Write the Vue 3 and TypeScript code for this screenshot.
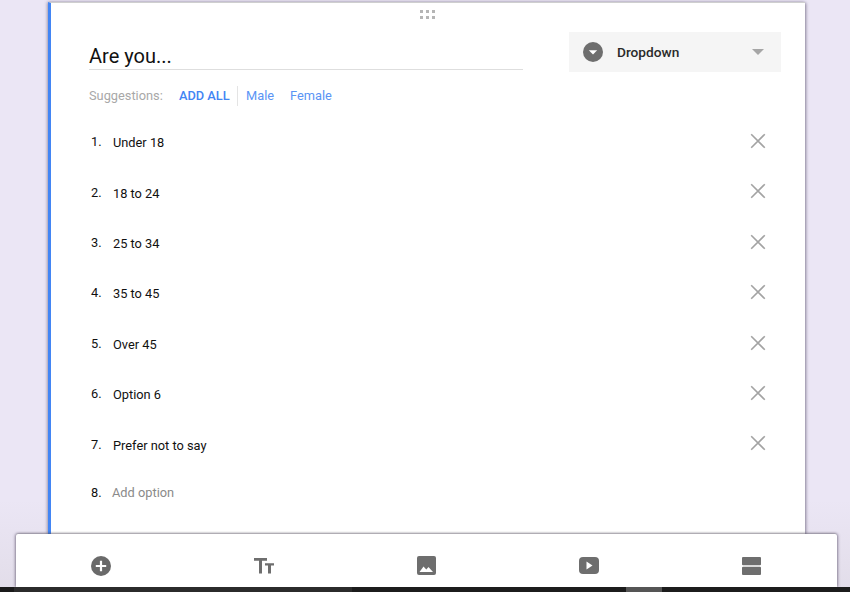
<script setup lang="ts">
const options: string[] = ['Under 18', '18 to 24', '25 to 34', '35 to 45', 'Over 45', 'Option 6', 'Prefer not to say']
</script>

<template>
  <div class="page">
    <main class="card">
      <div class="handle">
        <i v-for="n in 6" :key="n"></i>
      </div>
      <header class="head">
        <h1 class="title">Are you...</h1>
        <div class="type">
          <svg class="type-icon" width="20" height="20" viewBox="0 0 20 20">
            <circle cx="10" cy="10" r="10" fill="#6e6e6e" />
            <path d="M5.8 8.2h8.4L10 12.4z" fill="#fff" />
          </svg>
          <span class="type-label">Dropdown</span>
          <svg class="type-arrow" width="12" height="6" viewBox="0 0 12 6">
            <path d="M0 0h12L6 6z" fill="#a6a6a6" />
          </svg>
        </div>
      </header>
      <div class="suggest">
        <span class="suggest-label">Suggestions:</span>
        <span class="add-all">ADD ALL</span>
        <span class="sep"></span>
        <span class="link male">Male</span>
        <span class="link">Female</span>
      </div>
      <ol class="options">
        <li v-for="(o, i) in options" :key="o" class="option">
          <span class="num">{{ i + 1 }}.</span>
          <span class="text">{{ o }}</span>
          <svg class="close" width="16" height="16" viewBox="0 0 16 16">
            <path d="M1.2 1.2l13.6 13.6M14.8 1.2L1.2 14.8" stroke="#a3a3a3" stroke-width="1.6" fill="none" />
          </svg>
        </li>
        <li class="option add">
          <span class="num">8.</span>
          <span class="text muted">Add option</span>
        </li>
      </ol>
    </main>
    <nav class="toolbar">
      <svg width="20" height="20" viewBox="0 0 20 20">
        <circle cx="10" cy="10" r="10" fill="#6a6a6a" />
        <path d="M10 4.8v10.4M4.8 10h10.4" stroke="#fff" stroke-width="2.2" />
      </svg>
      <svg width="20" height="16" viewBox="0 0 20 16">
        <path d="M0 0h13v2.8H8v12.7H5V2.8H0z" fill="#6e6e6e" />
        <path d="M11 5.2h9v2.4h-3v7.9h-3V7.6h-3z" fill="#6e6e6e" />
      </svg>
      <svg width="19" height="19" viewBox="0 0 19 19">
        <rect width="19" height="19" rx="2" fill="#6e6e6e" />
        <path d="M2.5 16l4-5.5 2.8 3 2.2-2.6 4.5 5.1z" fill="#fff" />
      </svg>
      <svg width="20" height="17" viewBox="0 0 20 17">
        <rect width="20" height="17" rx="4" fill="#6e6e6e" />
        <path d="M7.5 4.5v8l6-4z" fill="#fff" />
      </svg>
      <svg width="19" height="18" viewBox="0 0 19 18">
        <rect width="19" height="8.2" rx="1" fill="#6e6e6e" />
        <rect y="9.8" width="19" height="8.2" rx="1" fill="#6e6e6e" />
      </svg>
    </nav>
    <footer class="taskbar">
      <span class="tab"></span>
    </footer>
  </div>
</template>

<style>
html,
body {
  margin: 0;
  background: #ebe6f5;
}
</style>

<style scoped>
.page {
  height: 592px;
  width: 850px;
  display: flex;
  flex-direction: column;
  overflow: hidden;
  font-family: Roboto, "Liberation Sans", sans-serif;
  background: linear-gradient(#ebe6f5 0 500px, #e2dde9 592px);
}
.card {
  flex: 1;
  min-height: 0;
  margin: 2px 0 0 48px;
  width: 757px;
  box-sizing: border-box;
  background: #fff;
  border-top: 1.5px solid #cfcfcf;
  border-left: 3px solid #4285f4;
  box-shadow: 1px 1px 3px rgba(70, 60, 90, 0.55), -1px 0 3px rgba(70, 60, 90, 0.35);
  padding: 0 24px 0 38px;
}
.handle {
  width: 15px;
  margin: 7px 0 0 331px;
  display: grid;
  grid-template-columns: repeat(3, 3px);
  gap: 3px;
  justify-content: space-between;
}
.handle i {
  width: 3px;
  height: 3px;
  background: #b5b5b5;
  display: block;
}
.head {
  display: flex;
  justify-content: space-between;
  margin-top: 13px;
  align-items: flex-start;
}
.title {
  width: 434px;
  height: 38px;
  box-sizing: border-box;
  margin: 0;
  padding-top: 12px;
  font-size: 20px;
  line-height: 24px;
  font-weight: 400;
  color: #111;
  border-bottom: 1px solid #dedede;
}
.type {
  width: 212px;
  height: 40px;
  box-sizing: border-box;
  background: #f5f5f5;
  display: flex;
  align-items: center;
  padding: 0 17px 0 14px;
}
.type-label {
  margin-left: 14px;
  font-size: 13.7px;
  font-weight: 500;
  color: #2a2a2a;
  flex: 1;
}
.suggest {
  display: flex;
  align-items: center;
  height: 20px;
  margin-top: 13.5px;
  font-size: 12.8px;
}
.suggest-label {
  color: #a8a8a8;
  width: 90px;
}
.add-all {
  color: #4285f4;
  font-weight: 500;
  width: 58px;
}
.sep {
  width: 1px;
  height: 20px;
  background: #e4e4e4;
}
.link {
  color: #5a94f5;
  margin-left: 16px;
}
.link.male {
  margin-left: 8px;
}
.options {
  list-style: none;
  margin: 12px 0 0;
  padding: 0;
}
.option {
  height: 50.4px;
  display: flex;
  align-items: center;
  font-size: 12.8px;
  color: #111;
}
.num {
  width: 24px;
  padding-left: 2px;
  box-sizing: border-box;
  margin-top: -2px;
}
.text {
  flex: 1;
}
.muted {
  color: #8a8a8a;
  margin-top: -2px;
  margin-left: -1px;
}
.add {
  margin-top: -1.5px;
}
.close {
  margin-right: 15.5px;
  margin-top: -3.5px;
}
.toolbar {
  height: 53px;
  margin: 0 13px 0 16px;
  background: #fff;
  flex: none;
  border-radius: 2px 2px 0 0;
  box-shadow: 0 -1px 2px rgba(90, 90, 90, 0.3), 1px 0 3px rgba(70, 60, 90, 0.45), -1px 0 3px rgba(70, 60, 90, 0.45);
  display: flex;
  align-items: center;
  justify-content: space-between;
  padding: 10px 76px 0 75px;
  box-sizing: border-box;
  position: relative;
}
.taskbar {
  height: 5px;
  flex: none;
  background: linear-gradient(90deg, #1a1a1a 0 14px, #2b2b2b 14px 352px, #1c1c1c 352px);
  position: relative;
}
.tab {
  position: absolute;
  left: 626px;
  width: 36px;
  top: 0;
  bottom: 0;
  background: #555;
}
</style>
